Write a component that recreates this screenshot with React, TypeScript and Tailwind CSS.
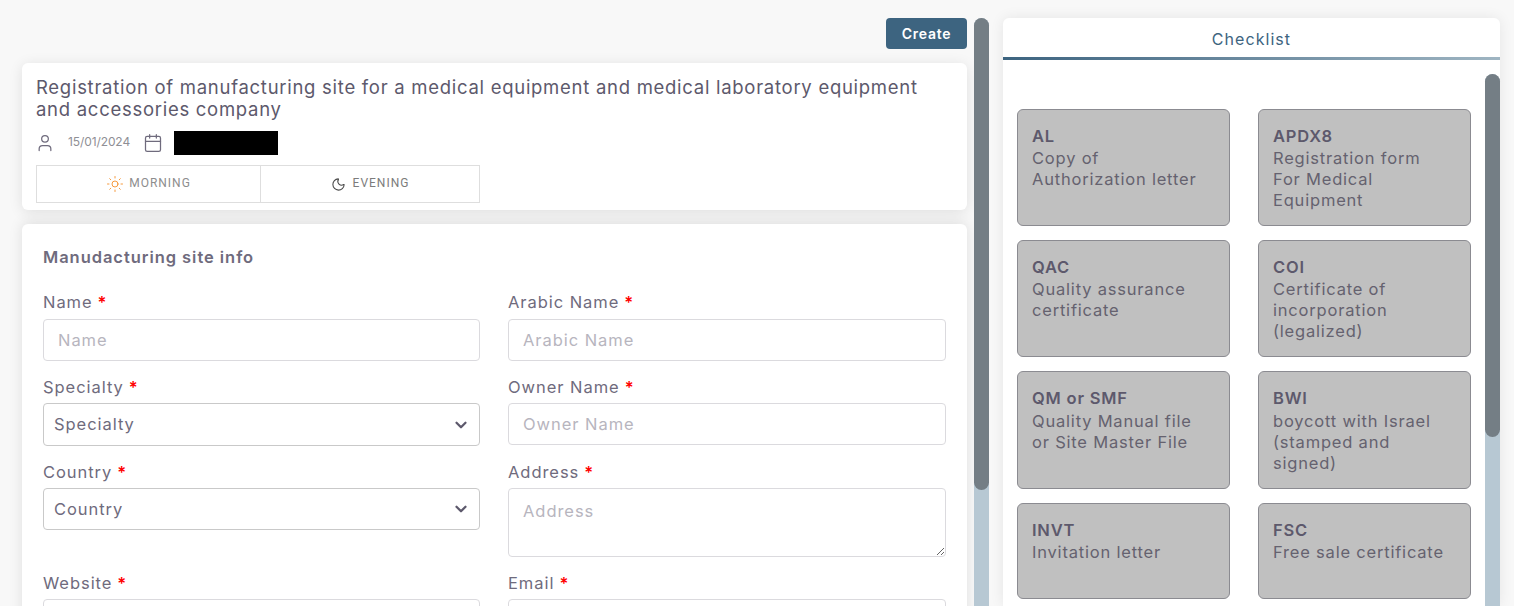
import React from 'react';
import { Calendar, ChevronDown, Moon, Sun, User } from 'lucide-react';

interface FieldProps {
    label: string;
    kind?: 'input' | 'select' | 'textarea';
    height?: string;
    first?: boolean;
}

const checklist = [
    { code: 'AL', lines: ['Copy of', 'Authorization letter'] },
    { code: 'APDX8', lines: ['Registration form', 'For Medical', 'Equipment'] },
    { code: 'QAC', lines: ['Quality assurance', 'certificate'] },
    { code: 'COI', lines: ['Certificate of', 'incorporation', '(legalized)'] },
    { code: 'QM or SMF', lines: ['Quality Manual file', 'or Site Master File'], tall: true },
    { code: 'BWI', lines: ['boycott with Israel', '(stamped and', 'signed)'], tall: true },
    { code: 'INVT', lines: ['Invitation letter'] },
    { code: 'FSC', lines: ['Free sale certificate'] },
];

const Field: React.FC<FieldProps> = ({ label, kind = 'input', height = 'h-[42px]', first = false }) => {
    return (
        <div className="flex flex-col">
            <label className={`h-[18px] ${first ? 'mb-[8px]' : 'mb-[7px]'} text-[16.5px] leading-[18px] tracking-[0.95px] text-[#6f6b7d]`}>
                {label}<span className="ml-[5px] text-[#ff0000] font-semibold">*</span>
            </label>
            {kind === 'select' ? (
                <div className={`${height} flex items-center justify-between pl-[10px] pr-[9px] bg-white border border-[#c9c9c9] rounded-[4px] text-[16.5px] tracking-[0.95px] text-[#6f6b7d]`}>
                    <span>{label}</span>
                    <ChevronDown size={18} strokeWidth={3} className="text-[#5d596c]" />
                </div>
            ) : kind === 'textarea' ? (
                <textarea
                    readOnly
                    placeholder={label}
                    className={`${height} block w-full px-[14px] py-[10px] bg-white border border-[#dbdade] rounded-[4px] text-[16.5px] leading-[24px] tracking-[0.95px] placeholder:text-[#b7b5be] outline-none`}
                />
            ) : (
                <input
                    readOnly
                    placeholder={label}
                    className={`${height} block w-full px-[14px] bg-white border border-[#dbdade] rounded-[4px] text-[16.5px] tracking-[0.95px] placeholder:text-[#b7b5be] outline-none`}
                />
            )}
        </div>
    );
};

const App: React.FC = () => {
    return (
        <div className="h-[606px] w-[1514px] overflow-hidden flex items-start bg-[#f8f8f8] font-['Inter',sans-serif] pt-[18px] pl-[22px] text-[#5d596c]">
            {/* left column */}
            <div className="w-[945px] shrink-0 flex flex-col">
                <div className="flex justify-end mb-[14px]">
                    <button className="h-[31px] w-[81px] rounded-[4px] bg-[#3d6480] text-white text-[14px] font-semibold tracking-[0.75px]">
                        Create
                    </button>
                </div>

                <div className="bg-white rounded-[6px] shadow-[0_2px_14px_rgba(0,0,0,0.1)] pt-[13px] pb-[7px] px-[14px] mb-[14px]">
                    <h1 className="text-[18.5px] leading-[22px] tracking-[0.72px] font-normal text-[#5d596c]">
                        Registration of manufacturing site for a medical equipment and medical laboratory equipment
                        <br />
                        and accessories company
                    </h1>
                    <div className="flex items-center h-[24px] mt-[11px]">
                        <User size={20} strokeWidth={1.5} className="-ml-[1px] text-[#6f6b7d]" />
                        <span className="ml-[13px] w-[62px] pb-[2px] whitespace-nowrap text-[12px] tracking-[-0.1px] text-[#8f8f95]">15/01/2024</span>
                        <Calendar size={20} strokeWidth={1.5} className="ml-[13px] text-[#6f6b7d]" />
                        <div className="ml-[11px] h-[24px] w-[104px] bg-black" />
                    </div>
                    <div className="flex w-[444px] h-[38px] mt-[10px] border border-[#dedede]">
                        <div className="w-[224px] flex items-center justify-center gap-[5px] border-r border-[#dedede] font-['Roboto',sans-serif] text-[12px] tracking-[1px] text-[#8d8d8d]">
                            <Sun size={18} strokeWidth={1.25} className="text-[#f59331]" />
                            <span className="pb-[2px]">MORNING</span>
                        </div>
                        <div className="flex-1 flex items-center justify-center gap-[7px] font-['Roboto',sans-serif] text-[12px] tracking-[1px] text-[#7c7c7c]">
                            <Moon size={15} strokeWidth={1.75} className="text-[#4a4a4a]" />
                            <span className="pb-[2px]">EVENING</span>
                        </div>
                    </div>
                </div>

                <div className="bg-white rounded-t-[6px] shadow-[0_-2px_14px_rgba(0,0,0,0.1)] pt-[24px] pl-[21px] pr-[21px] h-[400px]">
                    <h2 className="h-[18px] mb-[27px] text-[16.5px] leading-[18px] tracking-[0.95px] font-semibold text-[#6f6b7d]">
                        Manudacturing site info
                    </h2>
                    <div className="grid grid-cols-[437px_438px] gap-x-[28px] gap-y-[17px] items-start">
                        <Field label="Name" first />
                        <Field label="Arabic Name" first />
                        <Field label="Specialty" kind="select" height="h-[43px]" />
                        <Field label="Owner Name" />
                        <Field label="Country" kind="select" />
                        <Field label="Address" kind="textarea" height="h-[69px]" />
                        <Field label="Website" />
                        <Field label="Email" />
                    </div>
                </div>
            </div>

            {/* left scrollbar */}
            <div className="ml-[7px] w-[15px] h-[588px] shrink-0 rounded-t-full bg-[#b7c8d3]">
                <div className="h-[472px] rounded-full bg-[#747e85]" />
            </div>

            {/* checklist */}
            <div className="ml-[14px] w-[497px] h-[588px] shrink-0 bg-white rounded-t-[6px] shadow-[0_0_14px_rgba(0,0,0,0.08)]">
                <div className="h-[39px] flex items-start justify-center pt-[11px] text-[16px] leading-[20px] tracking-[1.05px] text-[#3d6480]">
                    Checklist
                </div>
                <div className="h-[3px] bg-gradient-to-r from-[#3d6480] to-[#9fb5c2]" />
                <div className="flex pt-[14px]">
                    <div className="flex-1 pl-[14px] pt-[35px] pr-[14px]">
                        <div className="grid grid-cols-[213px_213px] grid-rows-[117px_117px_118px_96px] gap-x-[28px] gap-y-[14px]">
                            {checklist.map((item) => (
                                <div key={item.code} className="bg-[#c0c0c0] border border-[#8b8b91] rounded-[6px] pl-[14px] pt-[16px] text-[16.5px] leading-[21px] tracking-[0.8px] text-[#65626f]">
                                    <div className={`font-semibold text-[#5d596c] ${item.tall ? 'mb-[2px]' : 'mb-[1px]'}`}>{item.code}</div>
                                    {item.lines.map((line) => (
                                        <div key={line}>{line}</div>
                                    ))}
                                </div>
                            ))}
                        </div>
                    </div>
                    <div className="w-[15px] h-[600px] shrink-0 rounded-t-full bg-[#b7c8d3]">
                        <div className="h-[363px] rounded-full bg-[#747e85]" />
                    </div>
                </div>
            </div>
        </div>
    );
};

export default App;
